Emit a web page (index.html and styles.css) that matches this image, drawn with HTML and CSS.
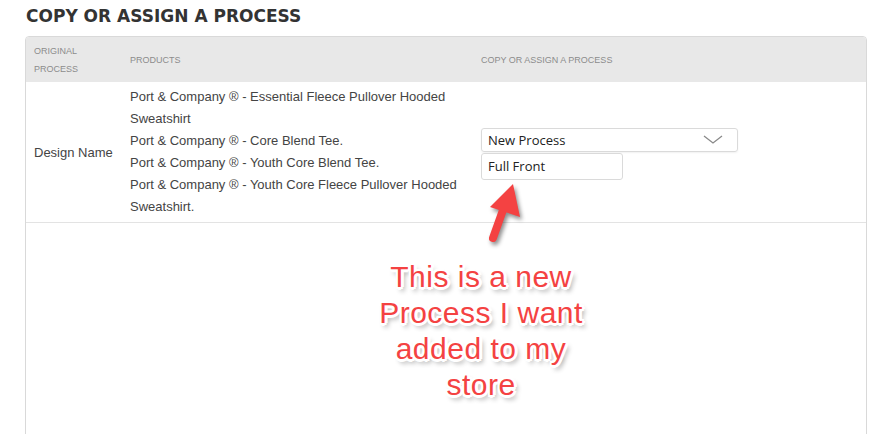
FILE: index.html
```html
<!DOCTYPE html>
<html lang="en">
<head>
    <meta charset="UTF-8">
    <meta name="viewport" content="width=device-width, initial-scale=1.0">
    <title>Copy or Assign a Process</title>
    <link rel="stylesheet" href="styles.css">
</head>
<body>
    <div class="page">
        <h1 class="page-title">COPY OR ASSIGN A PROCESS</h1>
        <div class="table-box">
            <table class="process-table">
                <thead>
                    <tr>
                        <th class="col-original">Original Process</th>
                        <th class="col-products">Products</th>
                        <th>Copy or Assign a Process</th>
                    </tr>
                </thead>
                <tbody>
                    <tr>
                        <td class="design-name">Design Name</td>
                        <td class="product-list">
                            <div>Port &amp; Company &reg; - Essential Fleece Pullover Hooded Sweatshirt</div>
                            <div>Port &amp; Company &reg; - Core Blend Tee.</div>
                            <div>Port &amp; Company &reg; - Youth Core Blend Tee.</div>
                            <div>Port &amp; Company &reg; - Youth Core Fleece Pullover Hooded Sweatshirt.</div>
                        </td>
                        <td class="assign-cell">
                            <div class="assign-stack">
                                <div class="fake-select">
                                    <span>New Process</span>
                                    <svg class="chevron" width="20" height="9" viewBox="0 0 20 9">
                                        <path d="M1 1 L10 8 L19 1" fill="none" stroke="#8a8a8a" stroke-width="1.3"/>
                                    </svg>
                                </div>
                                <input type="text" class="process-name" value="Full Front">
                            </div>
                        </td>
                    </tr>
                </tbody>
            </table>
        </div>

        <!-- annotation laid over the table -->
        <svg class="note-arrow" width="50" height="72" viewBox="0 0 50 72">
            <line x1="23" y1="34" x2="13" y2="62" stroke="#f44242" stroke-width="8" stroke-linecap="round"/>
            <polygon points="33,8 10,31 40,41" fill="#f44242"/>
        </svg>
        <div class="note-text">This is a new<br>Process I want<br>added to my<br>store</div>
    </div>
</body>
</html>
```

FILE: styles.css
```css
body {
    margin: 0;
    background: #fff;
}
.page {
    position: relative;
    padding: 6px 0 0 25px;
    height: 428px;
    overflow: hidden;
}
.page-title {
    margin: 0 0 10px 1px;
    font-family: "DejaVu Sans", Verdana, sans-serif;
    font-size: 17px;
    font-weight: bold;
    line-height: 20px;
    color: #333;
}
.table-box {
    width: 842px;
    box-sizing: border-box;
    min-height: 420px;
    border: 1px solid #d9d9d9;
    border-radius: 4px 4px 0 0;
    overflow: hidden;
}
.process-table {
    width: 100%;
    border-collapse: collapse;
    table-layout: fixed;
    font-family: "Liberation Sans", Arial, sans-serif;
}
.process-table th {
    background: #e8e8e8;
    color: #8c8c8c;
    font-size: 9px;
    font-weight: normal;
    text-transform: uppercase;
    text-align: left;
    line-height: 18px;
    padding: 5px 8px 4px 8px;
    vertical-align: middle;
}
.col-original {
    width: 80px;
}
.col-products {
    width: 335px;
}
.process-table td {
    padding: 4px 8px;
    font-size: 13px;
    color: #444;
    border-bottom: 1px solid #e3e3e3;
    vertical-align: middle;
}
.product-list {
    line-height: 22px;
}
.assign-cell {
    padding-top: 7px !important;
}
.assign-stack {
    display: flex;
    flex-direction: column;
    align-items: flex-start;
    gap: 1px;
}
.fake-select {
    display: flex;
    align-items: center;
    justify-content: space-between;
    box-sizing: border-box;
    width: 257px;
    height: 24px;
    padding: 0 14px 0 6px;
    border: 1px solid #dadada;
    border-radius: 3px;
    box-shadow: 0 1px 2px rgba(0, 0, 0, 0.06);
    font-family: "Open Sans", sans-serif;
    font-size: 13px;
    color: #222;
}
.chevron {
    display: block;
}
.process-name {
    box-sizing: border-box;
    width: 142px;
    height: 27px;
    margin: 0;
    padding: 0 6px;
    border: 1px solid #dadada;
    border-radius: 3px;
    font-family: "Open Sans", sans-serif;
    font-size: 13px;
    color: #222;
    background: #fff;
}
.note-arrow {
    position: absolute;
    left: 480px;
    top: 176px;
    filter: drop-shadow(2px 3px 2px rgba(0, 0, 0, 0.45));
}
.note-text {
    position: absolute;
    left: 361px;
    top: 259px;
    width: 240px;
    text-align: center;
    font-family: "Liberation Sans", Arial, sans-serif;
    font-size: 30px;
    line-height: 36px;
    letter-spacing: 0.5px;
    color: #f44242;
    text-shadow:
        2px 0 0 #fff, -2px 0 0 #fff, 0 2px 0 #fff, 0 -2px 0 #fff,
        2px 2px 0 #fff, -2px -2px 0 #fff, 2px -2px 0 #fff, -2px 2px 0 #fff,
        0 3px 0 #fff, 3px 0 0 #fff,
        3px 4px 5px rgba(0, 0, 0, 0.45);
}
```
